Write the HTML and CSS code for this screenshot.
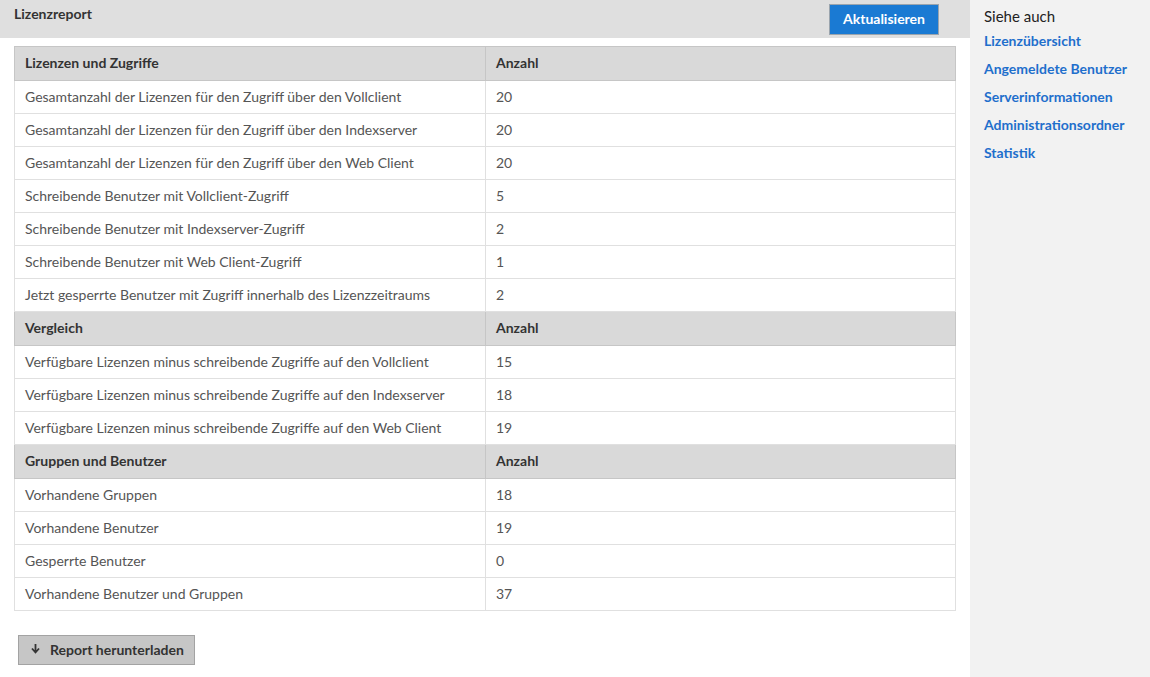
FILE: index.html
```html
<!DOCTYPE html>
<html lang="de">
<head>
  <meta charset="UTF-8" />
  <title>Lizenzreport</title>
  <link rel="stylesheet" href="styles.css">
</head>
<body>
  <div class="page">
    <div class="main">
      <div class="toolbar">
        <span class="title">Lizenzreport</span>
        <button class="primary">Aktualisieren</button>
      </div>

      <table class="report">
        <tr class="head"><th>Lizenzen und Zugriffe</th><th>Anzahl</th></tr>
        <tr><td>Gesamtanzahl der Lizenzen für den Zugriff über den Vollclient</td><td>20</td></tr>
        <tr><td>Gesamtanzahl der Lizenzen für den Zugriff über den Indexserver</td><td>20</td></tr>
        <tr><td>Gesamtanzahl der Lizenzen für den Zugriff über den Web Client</td><td>20</td></tr>
        <tr><td>Schreibende Benutzer mit Vollclient-Zugriff</td><td>5</td></tr>
        <tr><td>Schreibende Benutzer mit Indexserver-Zugriff</td><td>2</td></tr>
        <tr><td>Schreibende Benutzer mit Web Client-Zugriff</td><td>1</td></tr>
        <tr><td>Jetzt gesperrte Benutzer mit Zugriff innerhalb des Lizenzzeitraums</td><td>2</td></tr>
        <tr class="head"><th>Vergleich</th><th>Anzahl</th></tr>
        <tr><td>Verfügbare Lizenzen minus schreibende Zugriffe auf den Vollclient</td><td>15</td></tr>
        <tr><td>Verfügbare Lizenzen minus schreibende Zugriffe auf den Indexserver</td><td>18</td></tr>
        <tr><td>Verfügbare Lizenzen minus schreibende Zugriffe auf den Web Client</td><td>19</td></tr>
        <tr class="head"><th>Gruppen und Benutzer</th><th>Anzahl</th></tr>
        <tr><td>Vorhandene Gruppen</td><td>18</td></tr>
        <tr><td>Vorhandene Benutzer</td><td>19</td></tr>
        <tr><td>Gesperrte Benutzer</td><td>0</td></tr>
        <tr><td>Vorhandene Benutzer und Gruppen</td><td>37</td></tr>
      </table>

      <button class="download">
        <svg width="9" height="10" viewBox="0 0 9 10"><path d="M4.5 0v7M1 4.5l3.5 4 3.5-4" fill="none" stroke="#333" stroke-width="1.8"/></svg>
        Report herunterladen
      </button>
    </div>

    <div class="sidebar">
      <div class="side-title">Siehe auch</div>
      <a href="#">Lizenzübersicht</a>
      <a href="#">Angemeldete Benutzer</a>
      <a href="#">Serverinformationen</a>
      <a href="#">Administrationsordner</a>
      <a href="#">Statistik</a>
    </div>
  </div>
</body>
</html>
```

FILE: styles.css
```css
body {
  margin: 0;
  font-family: Lato, 'Noto Sans', sans-serif;
  font-size: 14px;
  color: #555;
  background: #fff;
}
.page {
  display: flex;
  height: 677px;
}
/* Main report area */
.main {
  width: 970px;
}
.toolbar {
  height: 38px;
  background: #dfdfdf;
  display: flex;
  justify-content: space-between;
  align-items: flex-start;
  padding: 0 31px 0 14px;
}
.title {
  margin-top: 5px;
  font-weight: 700;
  color: #333;
}
button {
  font-family: inherit;
  font-size: 14px;
  cursor: pointer;
}
.primary {
  margin-top: 4px;
  width: 110px;
  height: 31px;
  padding-bottom: 3px;
  background: #1a7ad3;
  color: #fff;
  font-weight: 700;
  border: 1px solid #9aa4ad;
}
/* Table */
.report {
  margin: 8px 0 0 14px;
  width: 942px;
  border-collapse: collapse;
}
.report td, .report th {
  height: 30px;
  padding: 0 10px 2px;
  border: 1px solid #e0e0e0;
  text-align: left;
}
.report td:first-child, .report th:first-child {
  width: 450px;
}
.report .head th {
  height: 31px;
  background: #d9d9d9;
  border-color: #c6c6c6;
  font-weight: 700;
  color: #333;
}
/* Download button */
.download {
  margin: 24px 0 0 18px;
  width: 177px;
  height: 30px;
  background: #c6c6c6;
  border: 1px solid #a3a3a3;
  color: #333;
  font-weight: 700;
  display: flex;
  align-items: center;
  gap: 10px;
  padding: 0 0 2px 12px;
}
/* Sidebar */
.sidebar {
  flex: 1;
  background: #f2f2f2;
  padding: 7px 14px;
  display: flex;
  flex-direction: column;
}
.side-title {
  font-size: 15px;
  color: #222;
  margin-bottom: 2px;
}
.sidebar a {
  color: #1f6fcc;
  font-weight: 700;
  text-decoration: none;
  line-height: 28px;
}
```
